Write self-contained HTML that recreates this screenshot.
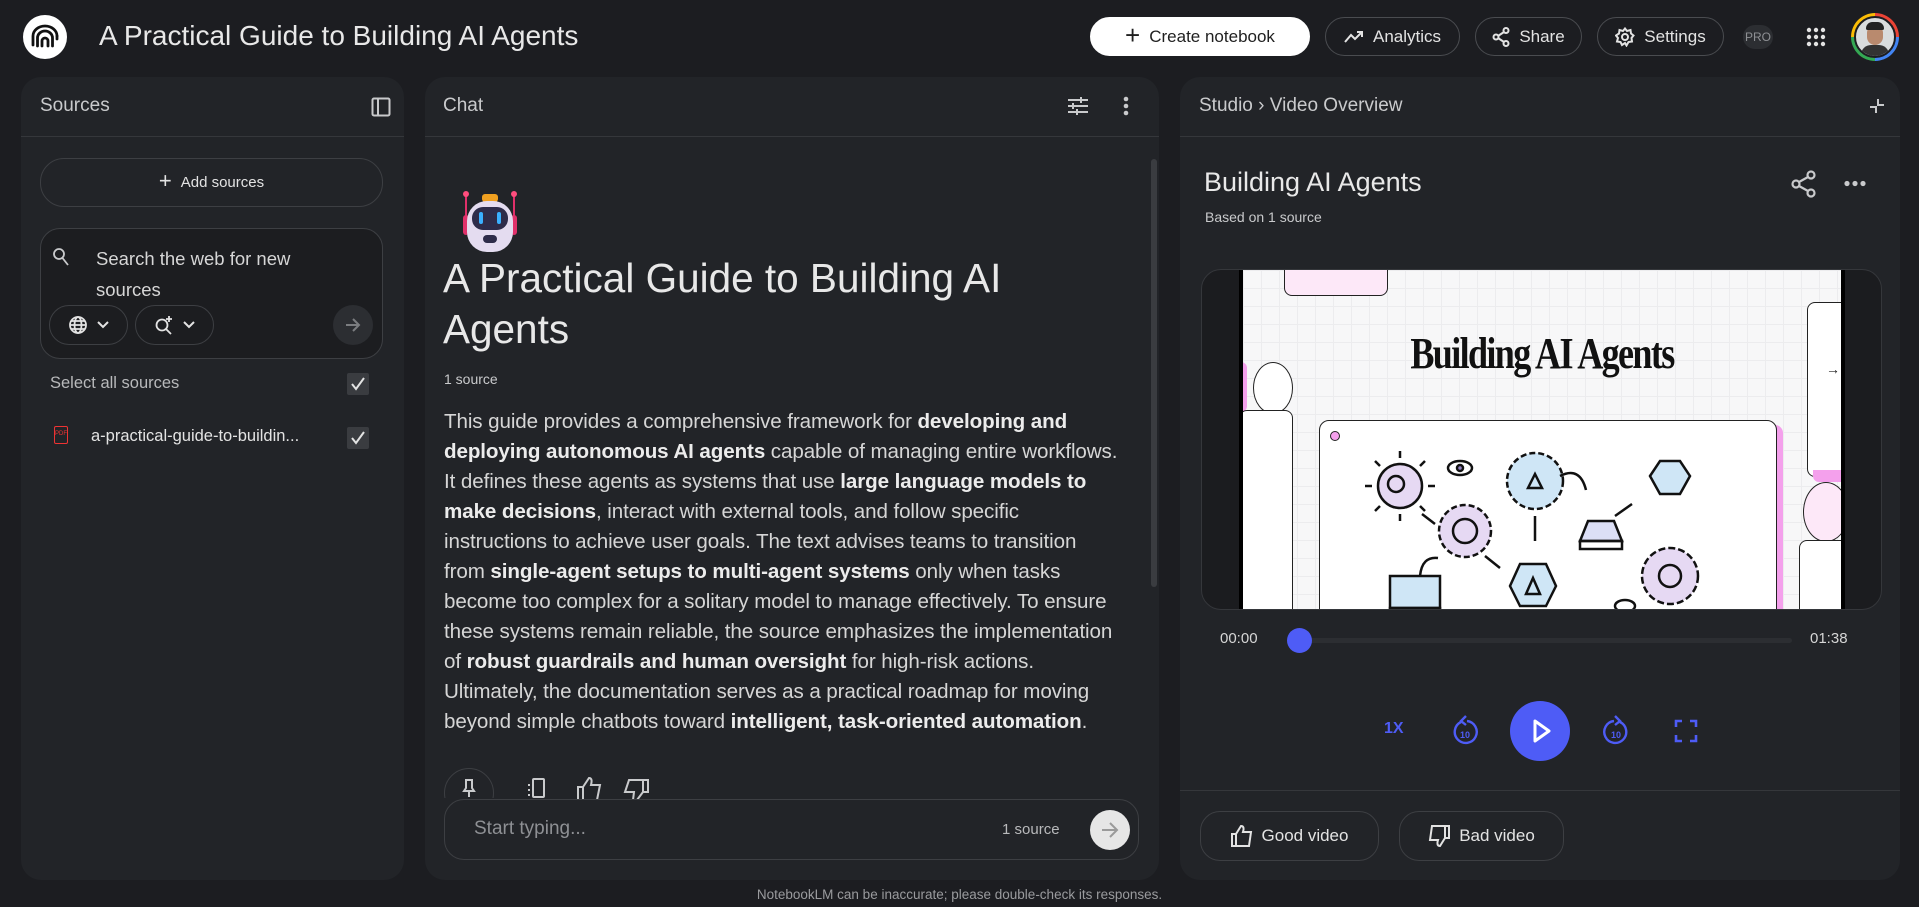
<!DOCTYPE html>
<html><head><meta charset="utf-8">
<style>
*{box-sizing:border-box;margin:0;padding:0}
body{width:1919px;height:907px;background:#1c1d21;font-family:"Liberation Sans",sans-serif;color:#e3e3e3;position:relative;overflow:hidden}
.abs{position:absolute}
.panel{position:absolute;top:77px;height:803px;background:#222428;border-radius:20px;overflow:hidden}
.ph{position:absolute;left:0;right:0;top:0;height:60px;border-bottom:1px solid #35373b}
.ph span{position:absolute;top:18px;font-size:19px;color:#c9cacc}
.pill{position:absolute;border:1px solid #4a4c50;border-radius:24px;display:flex;align-items:center;justify-content:center;font-size:17px;color:#e3e3e3;gap:9px}
svg{display:block}
.chk{position:absolute;width:22px;height:22px;background:#3a3c40;border-radius:2px}
p.body{position:absolute;left:444px;top:407px;width:678px;font-size:20.6px;line-height:30px;color:#d6d6d6;letter-spacing:-0.1px}
p.body b{color:#ececec}
</style></head><body>

<!-- top bar -->
<div class="abs" style="left:23px;top:15px;width:44px;height:44px;border-radius:50%;background:#fff">
<svg width="44" height="44" viewBox="0 0 44 44"><g fill="none" stroke="#111" stroke-width="2.8" stroke-linecap="round"><path d="M10 30 V21 a12 10 0 0 1 24 0"/><path d="M14.5 31 V23 a7.5 7 0 0 1 15 0 V31"/><path d="M19 31 V26 a3 3 0 0 1 6 0 V31"/><path d="M34 21 V24"/></g></svg></div>
<div class="abs" style="left:99px;top:20px;font-size:28px;color:#e8e8e8">A Practical Guide to Building AI Agents</div>

<div class="pill" style="left:1090px;top:17px;width:220px;height:39px;background:#fff;color:#1f1f1f;border-color:#fff;font-size:17px"><span style="font-size:26px;font-weight:300;margin-top:-3px">+</span>Create notebook</div>
<div class="pill" style="left:1325px;top:17px;width:135px;height:39px"><svg width="20" height="14" viewBox="0 0 20 14"><path d="M1 12 L7 5 L11 9 L18 2 M13 2 H18 V7" fill="none" stroke="#e3e3e3" stroke-width="2"/></svg>Analytics</div>
<div class="pill" style="left:1475px;top:17px;width:107px;height:39px"><svg width="18" height="20" viewBox="0 0 18 20"><g fill="none" stroke="#e3e3e3" stroke-width="2"><circle cx="14" cy="3.5" r="2.5"/><circle cx="4" cy="10" r="2.5"/><circle cx="14" cy="16.5" r="2.5"/><path d="M6 9 L12 5 M6 11 L12 15"/></g></svg>Share</div>
<div class="pill" style="left:1597px;top:17px;width:127px;height:39px"><svg width="20" height="20" viewBox="0 0 20 20"><g fill="none" stroke="#e3e3e3" stroke-width="2"><circle cx="10" cy="10" r="3"/><path d="M10 1.5 L12 4 L15.5 3 L16 6.5 L18.5 8.5 L16.5 11 L17 14.5 L13.5 15 L11.5 18.5 L10 16 L7 18 L5.5 15 L2 14.5 L3 11 L1 8.5 L4 6.5 L4.5 3 L8 4 Z"/></g></svg>Settings</div>
<div class="abs" style="left:1743px;top:25px;width:30px;height:24px;border-radius:12px;background:#2c2e32;color:#8e9094;font-size:12px;text-align:center;line-height:24px">PRO</div>
<svg class="abs" style="left:1806px;top:27px" width="20" height="20" viewBox="0 0 20 20"><g fill="#e3e3e3"><circle cx="3" cy="3" r="2.2"/><circle cx="10" cy="3" r="2.2"/><circle cx="17" cy="3" r="2.2"/><circle cx="3" cy="10" r="2.2"/><circle cx="10" cy="10" r="2.2"/><circle cx="17" cy="10" r="2.2"/><circle cx="3" cy="17" r="2.2"/><circle cx="10" cy="17" r="2.2"/><circle cx="17" cy="17" r="2.2"/></g></svg>
<div class="abs" style="left:1851px;top:13px;width:48px;height:48px;border-radius:50%;background:conic-gradient(#ea4335 0 25%,#4285f4 25% 50%,#34a853 50% 75%,#fbbc05 75% 100%);padding:3px"><div style="width:100%;height:100%;border-radius:50%;background:#d9dcdd;border:2px solid #1c1d21;position:relative;overflow:hidden"><div style="position:absolute;left:11px;top:7px;width:16px;height:20px;border-radius:8px;background:#b98a6e"></div><div style="position:absolute;left:10px;top:4px;width:18px;height:8px;border-radius:8px 8px 2px 2px;background:#222"></div><div style="position:absolute;left:5px;top:27px;width:28px;height:14px;border-radius:10px 10px 0 0;background:#333"></div></div></div>

<!-- Sources panel -->
<div class="panel" style="left:21px;width:383px">
<div class="ph"><span style="left:19px">Sources</span>
<svg class="abs" style="left:350px;top:20px" width="20" height="20" viewBox="0 0 20 20"><g fill="none" stroke="#c9cacc" stroke-width="2"><rect x="1.5" y="1.5" width="17" height="17" rx="1.5"/><path d="M7 2 V18"/></g></svg></div>
<div class="pill" style="left:19px;top:81px;width:343px;height:49px;font-size:15px;border-color:#3d3f43"><span style="font-size:22px;margin-top:-3px">+</span>Add sources</div>
<div class="abs" style="left:19px;top:151px;width:343px;height:131px;border:1px solid #3d3f43;border-radius:20px;background:#1c1d20">
<svg class="abs" style="left:11px;top:18px" width="18" height="20" viewBox="0 0 18 20"><g fill="none" stroke="#c9cacc" stroke-width="1.8"><circle cx="7" cy="7" r="5"/><path d="M10.5 11 L16 18"/></g></svg>
<div class="abs" style="left:55px;top:14px;font-size:18.5px;line-height:31px;color:#d6d6d6;width:260px">Search the web for new sources</div>
<div class="pill" style="left:8px;top:76px;width:79px;height:40px;border-color:#3d3f43"><svg width="20" height="20" viewBox="0 0 20 20"><g fill="none" stroke="#e3e3e3" stroke-width="1.8"><circle cx="10" cy="10" r="8"/><ellipse cx="10" cy="10" rx="3.5" ry="8"/><path d="M2 10 H18 M3.5 6 H16.5 M3.5 14 H16.5"/></g></svg><svg width="12" height="8" viewBox="0 0 12 8"><path d="M1 1 L6 6 L11 1" fill="none" stroke="#e3e3e3" stroke-width="2"/></svg></div>
<div class="pill" style="left:94px;top:76px;width:79px;height:40px;border-color:#3d3f43"><svg width="20" height="20" viewBox="0 0 20 20"><g fill="none" stroke="#e3e3e3" stroke-width="1.8"><circle cx="8" cy="10" r="5.5"/><path d="M12 14 L17 19"/><path d="M15 1 V7 M12 4 H18"/></g></svg><svg width="12" height="8" viewBox="0 0 12 8"><path d="M1 1 L6 6 L11 1" fill="none" stroke="#e3e3e3" stroke-width="2"/></svg></div>
<div class="abs" style="left:292px;top:76px;width:40px;height:40px;border-radius:50%;background:#2c2e32"><svg style="margin:11px" width="18" height="18" viewBox="0 0 18 18"><path d="M2 9 H15 M9 3 L15 9 L9 15" fill="none" stroke="#7b7d80" stroke-width="2"/></svg></div>
</div>
<div class="abs" style="left:29px;top:297px;font-size:16.5px;color:#b8b9bb">Select all sources</div>
<div class="chk" style="left:326px;top:296px"><svg width="22" height="22" viewBox="0 0 22 22"><path d="M5 11 L9 16 L17 5" fill="none" stroke="#e3e3e3" stroke-width="2"/></svg></div>
<div class="abs" style="left:33px;top:349px;width:14px;height:18px;border:1.5px solid #e33;border-radius:2px;font-size:6px;color:#e33;text-align:center;line-height:14px">PDF</div>
<div class="abs" style="left:70px;top:350px;font-size:16.5px;color:#e3e3e3">a-practical-guide-to-buildin...</div>
<div class="chk" style="left:326px;top:350px"><svg width="22" height="22" viewBox="0 0 22 22"><path d="M5 11 L9 16 L17 5" fill="none" stroke="#e3e3e3" stroke-width="2"/></svg></div>
</div>

<!-- Chat panel -->
<div class="panel" style="left:425px;width:734px">
<div class="ph"><span style="left:18px">Chat</span>
<svg class="abs" style="left:642px;top:19px" width="22" height="20" viewBox="0 0 22 20"><g stroke="#c9cacc" stroke-width="2"><path d="M1 4 H21 M1 10 H21 M1 16 H21"/><path d="M14 1 V7 M6 7 V13 M10 13 V19"/></g></svg>
<svg class="abs" style="left:698px;top:19px" width="6" height="20" viewBox="0 0 6 20"><g fill="#c9cacc"><circle cx="3" cy="3" r="2.3"/><circle cx="3" cy="10" r="2.3"/><circle cx="3" cy="17" r="2.3"/></g></svg></div>
<div class="abs" style="left:726px;top:82px;width:6px;height:428px;border-radius:3px;background:#3a3c40"></div>
</div>
<!-- robot -->
<svg class="abs" style="left:457px;top:189px" width="66" height="64" viewBox="0 0 66 64"><g><line x1="9" y1="6" x2="9" y2="30" stroke="#e0306a" stroke-width="2"/><line x1="57" y1="6" x2="57" y2="30" stroke="#e0306a" stroke-width="2"/><circle cx="9" cy="5" r="3" fill="#ff4d7d"/><circle cx="57" cy="5" r="3" fill="#ff4d7d"/><rect x="25" y="5" width="16" height="8" rx="3" fill="#f0a020"/><rect x="6" y="26" width="6" height="20" rx="3" fill="#e0306a"/><rect x="54" y="26" width="6" height="20" rx="3" fill="#e0306a"/><rect x="10" y="12" width="46" height="51" rx="20" fill="#e4dcf0"/><rect x="15" y="18" width="36" height="23" rx="11" fill="#2e2c4a"/><rect x="22" y="23" width="4" height="12" rx="2" fill="#3ab0ff"/><rect x="40" y="23" width="4" height="12" rx="2" fill="#3ab0ff"/><rect x="26" y="46" width="14" height="8" rx="4" fill="#2e2c4a"/></g></svg>
<div class="abs" style="left:443px;top:253px;font-size:40.5px;line-height:51px;color:#e8e8e8;width:660px">A Practical Guide to Building AI Agents</div>
<div class="abs" style="left:444px;top:371px;font-size:14px;color:#c9cacc">1 source</div>
<p class="body">This guide provides a comprehensive framework for <b>developing and deploying autonomous AI agents</b> capable of managing entire workflows. It defines these agents as systems that use <b>large language models to make decisions</b>, interact with external tools, and follow specific instructions to achieve user goals. The text advises teams to transition from <b>single-agent setups to multi-agent systems</b> only when tasks become too complex for a solitary model to manage effectively. To ensure these systems remain reliable, the source emphasizes the implementation of <b>robust guardrails and human oversight</b> for high-risk actions. Ultimately, the documentation serves as a practical roadmap for moving beyond simple chatbots toward <b>intelligent, task-oriented automation</b>.</p>
<div class="abs" style="left:444px;top:768px;width:50px;height:30px;overflow:hidden"><div style="width:50px;height:50px;border:1px solid #3d3f43;border-radius:50%"></div></div>
<svg class="abs" style="left:461px;top:778px" width="16" height="20" viewBox="0 0 16 20"><path d="M4 2 H12 M5 2 V10 L3 13 H13 L11 10 V2 M8 13 V19" fill="none" stroke="#c9cacc" stroke-width="2"/></svg>
<svg class="abs" style="left:524px;top:778px" width="24" height="22" viewBox="0 0 24 22"><g fill="none" stroke="#c9cacc" stroke-width="2"><rect x="9" y="1" width="11" height="18" rx="1"/><path d="M5 6 V8 M5 11 V13 M5 16 V18"/></g></svg>
<svg class="abs" style="left:576px;top:776px" width="28" height="24" viewBox="0 0 28 24"><path d="M2 11 H7 V24 H2 Z M7 11 L13 2 C16 2 16 5 15 9 H24 L21 24 H7" fill="none" stroke="#c9cacc" stroke-width="2"/></svg>
<svg class="abs" style="left:622px;top:778px" width="28" height="22" viewBox="0 0 28 22"><path d="M26 2 H21 V14 H26 Z M21 14 L15 22 M21 2 H7 L3 14 H12 L11 22" fill="none" stroke="#c9cacc" stroke-width="2"/></svg>
<div class="abs" style="left:444px;top:799px;width:695px;height:61px;border:1px solid #3d3f43;border-radius:20px;background:#222428">
<div class="abs" style="left:29px;top:18px;font-size:19px;color:#8e9094">Start typing...</div>
<div class="abs" style="left:557px;top:21px;font-size:15px;color:#b8b9bb">1 source</div>
<div class="abs" style="left:645px;top:10px;width:40px;height:40px;border-radius:50%;background:#e6e6e6"><svg style="margin:10px" width="20" height="20" viewBox="0 0 20 20"><path d="M2 10 H17 M10 3 L17 10 L10 17" fill="none" stroke="#9a9a9a" stroke-width="2"/></svg></div>
</div>

<!-- Studio panel -->
<div class="panel" style="left:1180px;width:720px">
<div class="ph"><span style="left:19px">Studio <span style="position:static;font-size:19px">&#8250;</span> Video Overview</span>
<svg class="abs" style="left:689px;top:21px" width="16" height="16" viewBox="0 0 16 16"><path d="M9 1 V7 H15 M1 9 H7 V15" fill="none" stroke="#c9cacc" stroke-width="2"/></svg></div>
<div class="abs" style="left:24px;top:90px;font-size:27px;color:#e8e8e8">Building AI Agents</div>
<div class="abs" style="left:25px;top:132px;font-size:14px;color:#c9cacc">Based on 1 source</div>
<svg class="abs" style="left:611px;top:93px" width="26" height="28" viewBox="0 0 26 28"><g fill="none" stroke="#c9cacc" stroke-width="2.2"><circle cx="20" cy="5" r="3.5"/><circle cx="5" cy="14" r="3.5"/><circle cx="20" cy="23" r="3.5"/><path d="M8 12 L17 7 M8 16 L17 21"/></g></svg>
<svg class="abs" style="left:664px;top:103px" width="22" height="7" viewBox="0 0 22 7"><g fill="#c9cacc"><circle cx="3" cy="3.5" r="2.6"/><circle cx="11" cy="3.5" r="2.6"/><circle cx="19" cy="3.5" r="2.6"/></g></svg>
<!-- video -->
<div class="abs" style="left:21px;top:192px;width:681px;height:341px;border:1px solid #35373b;border-radius:20px;background:#1b1c1f;overflow:hidden">
<div class="abs" style="left:37px;top:0;width:606px;height:340px;background:#000"></div>
<div class="abs" style="left:41px;top:0;width:598px;height:340px;background-color:#f7f7f8;background-image:linear-gradient(#ececee 1px,transparent 1px),linear-gradient(90deg,#ececee 1px,transparent 1px);background-size:18px 18px;overflow:hidden">
<div class="abs" style="left:41px;top:-4px;width:104px;height:30px;border:1.5px solid #222;border-radius:0 0 8px 8px;background:#fde8f8"></div>
<div class="abs" style="left:-10px;top:92px;width:14px;height:50px;background:#f4a0ec;border-radius:6px"></div>
<div class="abs" style="left:10px;top:92px;width:40px;height:52px;border:1.5px solid #222;border-radius:50%;background:#fff"></div>
<div class="abs" style="left:-4px;top:140px;width:54px;height:220px;border:1.5px solid #222;border-radius:8px;background:#fff"></div>
<div class="abs" style="left:564px;top:32px;width:50px;height:175px;border:1.5px solid #222;border-radius:8px;background:#fff;font-size:14px;color:#222;padding:58px 0 0 18px">&#8594;</div>
<div class="abs" style="left:570px;top:200px;width:40px;height:12px;background:#f4a0ec;border-radius:0 0 6px 6px"></div>
<div class="abs" style="left:560px;top:212px;width:46px;height:60px;border:1.5px solid #222;border-radius:50%;background:#fde8f8"></div>
<div class="abs" style="left:556px;top:270px;width:50px;height:90px;border:1.5px solid #222;border-radius:8px;background:#fff"></div>
<div class="abs" style="left:0;top:58px;width:598px;text-align:center;font-family:'Liberation Serif',serif;font-size:44px;font-weight:bold;color:#111;letter-spacing:-2px;transform:scaleX(0.82)">Building AI Agents</div>
<div class="abs" style="left:528px;top:155px;width:12px;height:200px;background:#f4a0ec;border-radius:0 8px 0 0"></div>
<div class="abs" style="left:76px;top:150px;width:458px;height:200px;border:1.5px solid #222;border-radius:10px;background:#fff">
<div class="abs" style="left:10px;top:10px;width:10px;height:10px;border:1.5px solid #222;border-radius:50%;background:#f4a0ec"></div>
<svg class="abs" style="left:40px;top:25px" width="380" height="175" viewBox="0 0 380 175"><g fill="none" stroke="#111" stroke-width="2.5">
<circle cx="40" cy="40" r="22" fill="#e6d9f3"/><path d="M40 12 V5 M40 68 V75 M12 40 H5 M68 40 H75 M20 20 L15 15 M60 60 L65 65 M60 20 L65 15 M20 60 L15 65"/><circle cx="36" cy="38" r="8"/>
<circle cx="105" cy="85" r="26" fill="#e6d9f3" stroke-dasharray="6 3"/><circle cx="105" cy="85" r="12"/>
<circle cx="175" cy="35" r="28" fill="#cfe6f6" stroke-dasharray="6 3"/><path d="M168 42 L175 28 L182 42 Z"/>
<path d="M160 160 L150 140 L160 118 L186 118 L196 140 L186 160 Z" fill="#cfe6f6"/><path d="M166 148 L173 132 L180 148 Z"/>
<path d="M220 95 L228 75 L254 75 L262 95 Z" fill="#dcdff6"/><rect x="220" y="95" width="42" height="8"/>
<path d="M290 30 L300 15 L320 15 L330 30 L320 48 L300 48 Z" fill="#cfe6f6"/>
<circle cx="310" cy="130" r="28" fill="#e6d9f3" stroke-dasharray="7 3"/><circle cx="310" cy="130" r="11"/>
<rect x="30" y="130" width="50" height="32" fill="#cfe6f6"/><rect x="30" y="162" width="50" height="6"/>
<ellipse cx="100" cy="22" rx="12" ry="7"/><circle cx="100" cy="22" r="3" fill="#9080c0"/>
<ellipse cx="265" cy="160" rx="10" ry="6"/><path d="M200 30 Q220 20 226 44 M255 70 L272 58 M125 110 L140 122 M62 68 L75 78 M175 70 V95 M60 130 Q62 110 78 112"/>
</g></svg></div>
</div>
</div>
<!-- timeline -->
<div class="abs" style="left:40px;top:553px;font-size:15px;color:#d6d6d6">00:00</div>
<div class="abs" style="left:119px;top:561px;width:493px;height:5px;border-radius:3px;background:#2c2e32"></div>
<div class="abs" style="left:107px;top:551px;width:25px;height:25px;border-radius:50%;background:#4e5cf6"></div>
<div class="abs" style="left:630px;top:553px;font-size:15px;color:#d6d6d6">01:38</div>
<!-- controls -->
<div class="abs" style="left:204px;top:643px;font-size:16px;font-weight:bold;color:#4e5cf6">1X</div>
<svg class="abs" style="left:271px;top:637px" width="28" height="32" viewBox="0 0 28 32"><g fill="none" stroke="#4e5cf6" stroke-width="2.4"><path d="M10 8 A11 11 0 1 0 16 7"/><path d="M15 2 L10 7 L15 11"/></g><text x="14" y="24" font-size="9" font-weight="bold" fill="#4e5cf6" text-anchor="middle" font-family="Liberation Sans">10</text></svg>
<div class="abs" style="left:330px;top:624px;width:60px;height:60px;border-radius:50%;background:#4e5cf6"><svg style="margin:18px 0 0 23px" width="18" height="24" viewBox="0 0 18 24"><path d="M2 2 L16 12 L2 22 Z" fill="none" stroke="#fff" stroke-width="3" stroke-linejoin="round"/></svg></div>
<svg class="abs" style="left:422px;top:637px" width="28" height="32" viewBox="0 0 28 32"><g fill="none" stroke="#4e5cf6" stroke-width="2.4"><path d="M18 8 A11 11 0 1 1 12 7"/><path d="M13 2 L18 7 L13 11"/></g><text x="14" y="24" font-size="9" font-weight="bold" fill="#4e5cf6" text-anchor="middle" font-family="Liberation Sans">10</text></svg>
<svg class="abs" style="left:494px;top:642px" width="24" height="24" viewBox="0 0 24 24"><path d="M2 8 V2 H8 M16 2 H22 V8 M22 16 V22 H16 M8 22 H2 V16" fill="none" stroke="#4e5cf6" stroke-width="2.6"/></svg>
<div class="abs" style="left:0;right:0;top:713px;border-top:1px solid #35373b"></div>
<div class="pill" style="left:20px;top:734px;width:179px;height:50px;border-color:#3d3f43;border-radius:20px"><svg width="22" height="22" viewBox="0 0 22 22"><path d="M1 9 H5 V21 H1 Z M5 9 L10 1 C13 1 13 4 12 7 H20 L18 21 H5" fill="none" stroke="#e3e3e3" stroke-width="2"/></svg>Good video</div>
<div class="pill" style="left:219px;top:734px;width:165px;height:50px;border-color:#3d3f43;border-radius:20px"><svg width="22" height="22" viewBox="0 0 22 22"><path d="M21 1 H17 V13 H21 Z M17 13 L12 21 C9 21 9 18 10 15 H2 L4 1 H17" fill="none" stroke="#e3e3e3" stroke-width="2"/></svg>Bad video</div>
</div>

<div class="abs" style="left:0;width:1919px;top:887px;text-align:center;font-size:13.5px;color:#9a9b9e">NotebookLM can be inaccurate; please double-check its responses.</div>
</body></html>
